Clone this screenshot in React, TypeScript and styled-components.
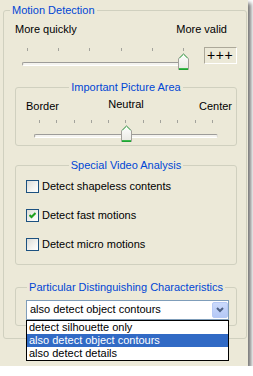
import React from "react";
import styled, { createGlobalStyle } from "styled-components";

const GlobalStyle = createGlobalStyle`
  html, body {
    margin: 0;
    background: #ffffff;
  }
  body {
    font-family: "Liberation Sans", Arial, sans-serif;
    font-size: 11px;
    color: #000;
  }
`;

const Panel = styled.div`
  width: 248px;
  height: 366px;
  box-sizing: border-box;
  padding: 4px 1px 0 3px;
  background: #ece9d8;
  box-shadow: 3px 3px 4px rgba(0, 0, 0, 0.55);
`;

const Group = styled.fieldset<{ $pad?: string; $mt?: number }>`
  margin: ${(p) => p.$mt || 0}px 0 0 0;
  min-width: 0;
  border: 1px solid #d0d0bf;
  border-radius: 3px;
  padding: ${(p) => p.$pad || "0"};
`;

const Legend = styled.legend<{ $center?: boolean }>`
  color: #0046d5;
  line-height: 13px;
  height: 13px;
  padding: 0 2px;
  margin: ${(p) => (p.$center ? "0 auto" : "0 0 0 -5px")};
  white-space: nowrap;
`;

const LabelsRow = styled.div<{ $mt: number }>`
  display: flex;
  justify-content: space-between;
  margin-top: ${(p) => p.$mt}px;
  padding-right: 10px;
  line-height: 13px;
  height: 13px;
`;

const ThreeLabels = styled.div`
  display: grid;
  grid-template-columns: 1fr auto 1fr;
  margin-top: 6px;
  padding: 0 4px;
  line-height: 13px;
  height: 13px;
`;

const Label = styled.span<{ $align?: "left" | "center" | "right"; $raise?: number }>`
  text-align: ${(p) => p.$align || "left"};
  padding-left: ${(p) => (p.$align === "left" ? 6 : 0)}px;
  position: relative;
  top: ${(p) => -(p.$raise || 0)}px;
`;

const SliderRow = styled.div`
  display: flex;
  align-items: flex-start;
  margin-top: 10px;
  padding-left: 7px;
`;

const SliderBox = styled.div<{ $w: number; $center?: boolean }>`
  position: relative;
  width: ${(p) => p.$w}px;
  height: 24px;
  flex: none;
  margin: ${(p) => (p.$center ? "5px auto 0" : "0")};
`;

const Ticks = styled.div`
  display: flex;
  justify-content: space-between;
  padding: 2px 5px 0;
`;

const Tick = styled.span`
  width: 1px;
  height: 3px;
  background: #a3a39c;
`;

const Track = styled.div`
  position: absolute;
  left: 0;
  right: 0;
  top: 16px;
  height: 4px;
  box-sizing: border-box;
  border: 1px solid;
  border-color: #9d9c99 #dcdbd3 #ffffff #9d9c99;
  border-radius: 2px;
  background: #f4f3ee;
`;

const ThumbWrap = styled.div`
  position: absolute;
  top: 7px;
  width: 11px;
  height: 17px;
  line-height: 0;
`;

const ValueBox = styled.div`
  margin: 1px 0 0 15px;
  width: 33px;
  height: 17px;
  box-sizing: border-box;
  border: 1px solid;
  border-color: #aca899 #ffffff #ffffff #aca899;
  font-size: 14px;
  line-height: 15px;
  letter-spacing: 0.6px;
  padding-left: 2px;
`;

const CheckList = styled.div`
  display: flex;
  flex-direction: column;
  gap: 16px;
  padding: 8px 0 13px 10px;
`;

const CheckRow = styled.label`
  display: flex;
  align-items: center;
  height: 13px;
  line-height: 13px;
  gap: 3px;
`;

const Box = styled.span`
  width: 13px;
  height: 13px;
  box-sizing: border-box;
  border: 1px solid #1c5180;
  background: linear-gradient(135deg, #dcdcd7 0%, #f6f6f3 65%, #ffffff 100%);
  display: flex;
  align-items: center;
  justify-content: center;
  flex: none;
`;

const ComboWrap = styled.div`
  position: relative;
  margin: 6px 0 0 10px;
  width: 203px;
`;

const Combo = styled.div`
  display: flex;
  align-items: flex-start;
  height: 20px;
  box-sizing: border-box;
  border: 1px solid #7f9db9;
  background: #fff;
`;

const ComboText = styled.span`
  flex: 1;
  padding-left: 3px;
  line-height: 17px;
`;

const DropButton = styled.span`
  width: 16px;
  height: 16px;
  margin: 1px 0 0;
  box-sizing: border-box;
  border: 1px solid #b6c9f5;
  border-radius: 2px;
  background: linear-gradient(180deg, #cbdafc 0%, #b4c8f6 100%);
  display: flex;
  align-items: center;
  justify-content: center;
`;

const DropList = styled.ul`
  position: absolute;
  left: 0;
  top: 100%;
  width: 203px;
  box-sizing: border-box;
  margin: 0;
  padding: 0;
  list-style: none;
  border: 1px solid #000;
  background: #fff;
`;

const Option = styled.li<{ $selected?: boolean }>`
  height: 13px;
  line-height: 13px;
  padding-left: 2px;
  background: ${(p) => (p.$selected ? "#316ac5" : "#fff")};
  color: ${(p) => (p.$selected ? "#fff" : "#000")};
`;

const Thumb = () => (
  <svg width="11" height="17" viewBox="0 0 11 17">
    <defs>
      <linearGradient id="tg" x1="0" y1="0" x2="0" y2="1">
        <stop offset="0" stopColor="#ffffff" />
        <stop offset="1" stopColor="#e8e8e2" />
      </linearGradient>
    </defs>
    <path d="M0.5 5.5 L5.5 0.5 L10.5 5.5 L10.5 16.5 L0.5 16.5 Z" fill="url(#tg)" stroke="#a2a19b" />
    <path d="M1.5 5.2 L5.5 1.3 L9.5 5.2" fill="none" stroke="#56c562" />
    <path d="M1 15.5 H10" stroke="#3db94d" />
    <path d="M1 16.5 H10" stroke="#1fa334" />
  </svg>
);

const Slider = ({ width, ticks, value, center }: { width: number; ticks: number; value: number; center?: boolean }) => (
  <SliderBox $w={width} $center={center}>
    <Ticks>
      {Array.from({ length: ticks }).map((_, i) => (
        <Tick key={i} />
      ))}
    </Ticks>
    <Track />
    <ThumbWrap style={{ left: Math.round((value / (ticks - 1)) * (width - 11)) }}>
      <Thumb />
    </ThumbWrap>
  </SliderBox>
);

const Check = () => (
  <svg width="7" height="7" viewBox="0 0 7 7">
    <path d="M0.5 3 L2.5 5 L6.5 1" fill="none" stroke="#21a121" strokeWidth="2" />
  </svg>
);

const Checkbox = ({ label, checked }: { label: string; checked?: boolean }) => (
  <CheckRow>
    <Box>{checked && <Check />}</Box>
    <span>{label}</span>
  </CheckRow>
);

export default function App() {
  return (
    <>
      <GlobalStyle />
      <Panel>
        <Group $pad="0 9px 12px 11px">
          <Legend>Motion Detection</Legend>
          <LabelsRow $mt={6}>
            <span>More quickly</span>
            <span>More valid</span>
          </LabelsRow>
          <SliderRow>
            <Slider width={167} ticks={6} value={5} />
            <ValueBox>+++</ValueBox>
          </SliderRow>

          <Group $mt={11} $pad="0 0 3px">
            <Legend $center>Important Picture Area</Legend>
            <ThreeLabels>
              <Label $align="left">Border</Label>
              <Label $align="center" $raise={2}>
                Neutral
              </Label>
              <Label $align="right">Center</Label>
            </ThreeLabels>
            <Slider width={184} ticks={11} value={5} center />
          </Group>

          <Group $mt={13}>
            <Legend $center>Special Video Analysis</Legend>
            <CheckList>
              <Checkbox label="Detect shapeless contents" />
              <Checkbox label="Detect fast motions" checked />
              <Checkbox label="Detect micro motions" />
            </CheckList>
          </Group>

          <Group $mt={16} $pad="0 0 5px">
            <Legend $center>Particular Distinguishing Characteristics</Legend>
            <ComboWrap>
              <Combo>
                <ComboText>also detect object contours</ComboText>
                <DropButton>
                  <svg width="8" height="6" viewBox="0 0 8 6">
                    <path d="M1 1 L4 4 L7 1" fill="none" stroke="#4d6185" strokeWidth="2" />
                  </svg>
                </DropButton>
              </Combo>
              <DropList>
                <Option>detect silhouette only</Option>
                <Option $selected>also detect object contours</Option>
                <Option>also detect details</Option>
              </DropList>
            </ComboWrap>
          </Group>
        </Group>
      </Panel>
    </>
  );
}
